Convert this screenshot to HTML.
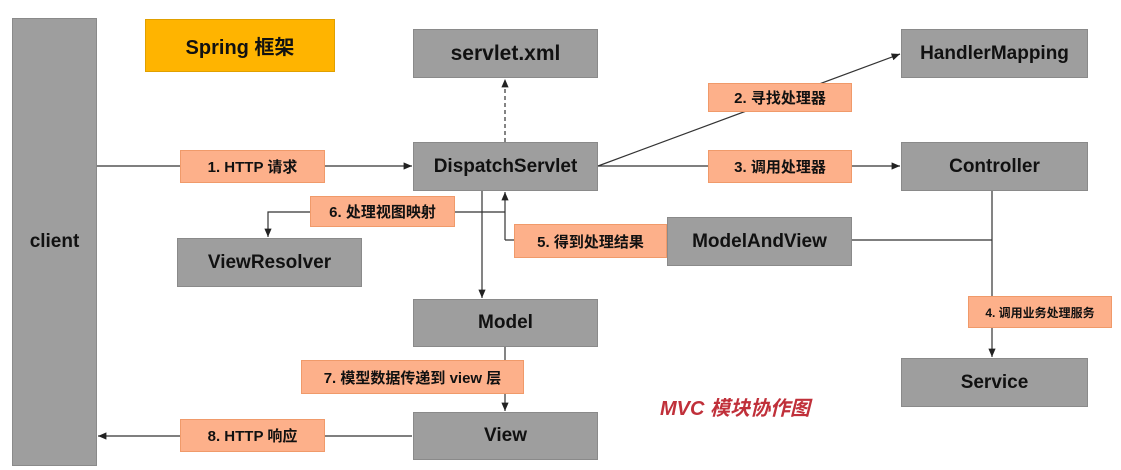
<!DOCTYPE html>
<html style="margin:0;height:470px;overflow:hidden"><head><meta charset="utf-8"><style>
body{margin:0;width:1121px;height:470px;background:#fff;position:relative;overflow:hidden;font-family:"Liberation Sans","Noto Sans CJK SC",sans-serif;font-weight:bold}
.b{position:absolute;background:#9e9e9e;border:1px solid #8a8a8a;display:flex;align-items:center;justify-content:center;font-size:19px;color:#111;box-sizing:border-box}
.l{position:absolute;background:#fdb08a;border:1px solid #f09a6a;display:flex;align-items:center;justify-content:center;font-size:15px;color:#111;box-sizing:border-box}
svg{position:absolute;left:0;top:0}
</style></head><body>
<svg width="1121" height="470" stroke="#333" stroke-width="1.2" fill="none">
<defs><marker id="a" markerWidth="8" markerHeight="8" refX="7" refY="4" orient="auto"><path d="M0,1 L7,4 L0,7z" fill="#222" stroke="none"/></marker></defs>
<line x1="97" y1="166" x2="412" y2="166" marker-end="url(#a)"/>
<line x1="598" y1="166" x2="900" y2="166" marker-end="url(#a)"/>
<line x1="598" y1="166" x2="900" y2="54" marker-end="url(#a)"/>
<line x1="505" y1="142" x2="505" y2="79" stroke-dasharray="4,3" marker-end="url(#a)"/>
<line x1="482" y1="191" x2="482" y2="298" marker-end="url(#a)"/>
<line x1="667" y1="240" x2="505" y2="240"/>
<line x1="505" y1="240" x2="505" y2="192" marker-end="url(#a)"/>
<polyline points="505,212 268,212 268,237" marker-end="url(#a)"/>
<line x1="852" y1="240" x2="992" y2="240"/>
<line x1="992" y1="191" x2="992" y2="357" marker-end="url(#a)"/>
<line x1="505" y1="347" x2="505" y2="411" marker-end="url(#a)"/>
<line x1="412" y1="436" x2="98" y2="436" marker-end="url(#a)"/>
</svg>
<div class="b" style="left:12px;top:18px;width:85px;height:448px">client</div>
<div class="b" style="left:145px;top:19px;width:190px;height:53px;background:#ffb400;border-color:#e0a000;font-size:20px">Spring 框架</div>
<div class="b" style="left:413px;top:29px;width:185px;height:49px;font-size:21px">servlet.xml</div>
<div class="b" style="left:901px;top:29px;width:187px;height:49px">HandlerMapping</div>
<div class="b" style="left:413px;top:142px;width:185px;height:49px">DispatchServlet</div>
<div class="b" style="left:901px;top:142px;width:187px;height:49px">Controller</div>
<div class="b" style="left:177px;top:238px;width:185px;height:49px">ViewResolver</div>
<div class="b" style="left:667px;top:217px;width:185px;height:49px">ModelAndView</div>
<div class="b" style="left:901px;top:358px;width:187px;height:49px">Service</div>
<div class="b" style="left:413px;top:299px;width:185px;height:48px">Model</div>
<div class="b" style="left:413px;top:412px;width:185px;height:48px">View</div>
<div class="l" style="left:708px;top:83px;width:144px;height:29px">2. 寻找处理器</div>
<div class="l" style="left:180px;top:150px;width:145px;height:33px">1. HTTP 请求</div>
<div class="l" style="left:708px;top:150px;width:144px;height:33px">3. 调用处理器</div>
<div class="l" style="left:310px;top:196px;width:145px;height:31px">6. 处理视图映射</div>
<div class="l" style="left:514px;top:224px;width:153px;height:34px">5. 得到处理结果</div>
<div class="l" style="left:968px;top:296px;width:144px;height:32px;font-size:12px">4. 调用业务处理服务</div>
<div class="l" style="left:301px;top:360px;width:223px;height:34px">7. 模型数据传递到 view 层</div>
<div class="l" style="left:180px;top:419px;width:145px;height:33px">8. HTTP 响应</div>
<div style="position:absolute;left:660px;top:392px;font-size:20px;color:#c0303a;font-style:italic">MVC 模块协作图</div>
</body></html>
